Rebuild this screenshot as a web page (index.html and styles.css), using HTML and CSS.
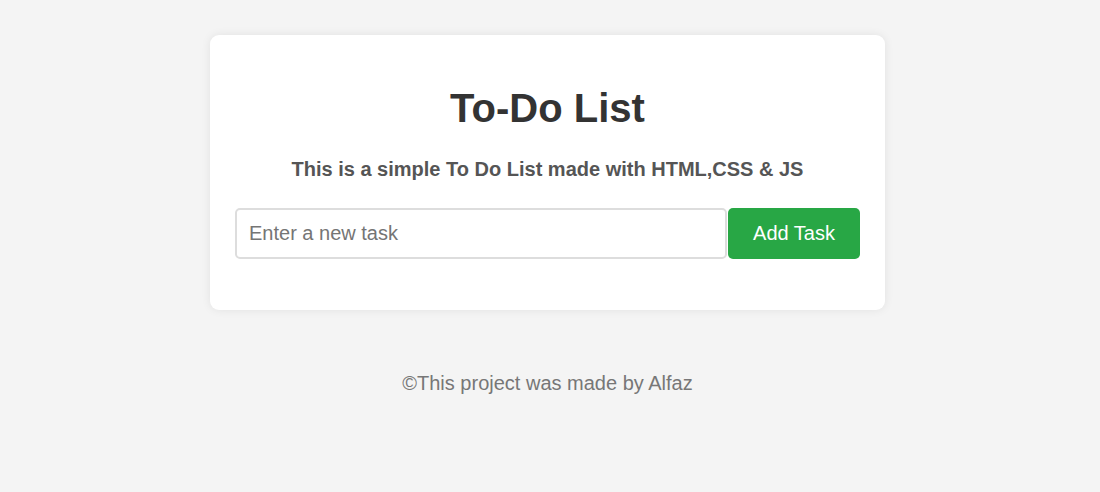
FILE: index.html
```html
<!DOCTYPE html>
<html lang="en">
<head>
<meta charset="UTF-8">
<title>To-Do List</title>
<link rel="stylesheet" href="styles.css">
</head>
<body>
  <main class="card">
    <h1 class="title">To-Do List</h1>
    <p class="subtitle">This is a simple To Do List made with HTML,CSS &amp; JS</p>
    <div class="row">
      <input class="task-input" type="text" placeholder="Enter a new task">
      <button class="add-btn" type="button">Add Task</button>
    </div>
    <ul class="list"></ul>
  </main>
  <footer class="footer">©This project was made by Alfaz</footer>
</body>
</html>
```

FILE: styles.css
```css
* { box-sizing: border-box; }

body {
  margin: 0;
  padding: 35px 5px 0 0;
  background: #f4f4f4;
  font-family: "Liberation Sans", Arial, sans-serif;
  font-size: 20px;
}

.card {
  width: 675px;
  margin: 0 auto;
  padding: 25px;
  background: #fff;
  border-radius: 9px;
  box-shadow: 0 0 10px rgba(0, 0, 0, 0.08);
  text-align: center;
}

.title {
  margin: 25px 0 27px;
  font-size: 40px;
  font-weight: bold;
  color: #333;
  line-height: 46px;
}

.subtitle {
  margin: 0 0 27px;
  font-size: 20px;
  font-weight: bold;
  color: #555;
  line-height: 23px;
}

.row {
  display: flex;
  gap: 1px;
  margin-bottom: 26px;
}

.task-input {
  flex: 1;
  height: 51px;
  padding: 12px 12px;
  border: 2px solid #ddd;
  border-radius: 5px;
  font-family: inherit;
  font-size: 20px;
  color: #333;
  outline: none;
}

.task-input::placeholder { color: #757575; }

.add-btn {
  width: 132px;
  height: 51px;
  padding: 0;
  border: none;
  border-radius: 5px;
  background: #28a745;
  color: #fff;
  font-family: inherit;
  font-size: 20px;
  cursor: pointer;
}

.list {
  margin: 0;
  padding: 0;
  list-style: none;
}

.footer {
  margin-top: 62px;
  text-align: center;
  color: #777;
  font-size: 20px;
  line-height: 23px;
}
```
